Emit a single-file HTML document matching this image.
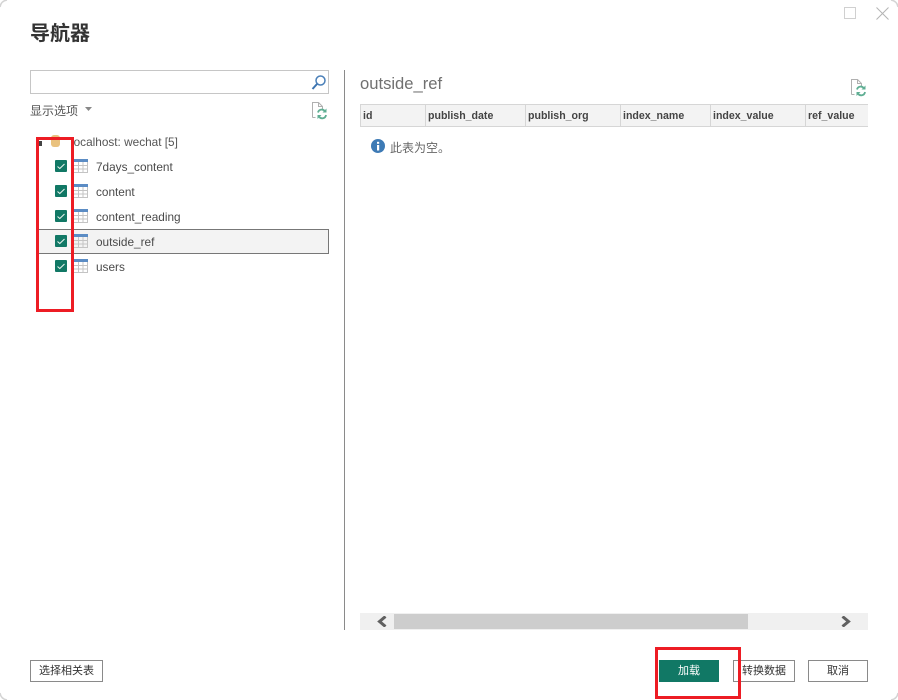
<!DOCTYPE html>
<html lang="zh">
<head>
<meta charset="utf-8">
<title>导航器</title>
<style>
html,body{margin:0;padding:0;background:#fff}
body{position:relative;width:898px;height:700px;overflow:hidden;font-family:"Liberation Sans","Noto Sans CJK SC",sans-serif;color:#4a4a4a;font-size:11.8px}
.a{position:absolute;box-sizing:border-box;white-space:nowrap}
.t{line-height:16px}
.cb{left:55px;width:12px;height:12px;background:#117865;border-radius:1px}
.cb svg,.ti svg{display:block}
.ti{left:73px;width:15px;height:14px}
.th{top:104px;height:23px;background:#f3f3f3;border:1px solid #d6d6d6;border-left:0;font-weight:bold;font-size:10.6px;line-height:22px;padding-left:2px;color:#444}
.btn{top:660px;height:22px;border:1px solid #8a8a8a;background:#fff;text-align:center;font-size:11px;line-height:20px;color:#333}
.red{border:3px solid #ed1c24}
</style>
</head>
<body>
<!-- window corners -->
<svg class="a" style="left:0;top:0" width="898" height="700"><path d="M0 7Q1 1 7 0M891 0Q897 1 898 7M0 693Q1 699 7 700M898 693Q897 699 891 700" fill="none" stroke="#d4d4d4" stroke-width="1.500"/></svg>

<!-- window controls -->
<div class="a" style="left:844px;top:7px;width:12px;height:12px;border:1px solid #d0d0d0"></div>
<svg class="a" style="left:876px;top:7px" width="13" height="13"><path d="M.5.5l12 12M12.500.5l-12 12" stroke="#b4b4b4" fill="none"/></svg>

<div class="a" style="left:30px;top:21px;font-size:20px;font-weight:bold;line-height:27px;color:#333">导航器</div>

<!-- search -->
<div class="a" style="left:30px;top:70px;width:299px;height:24px;border:1px solid #c6c6c6"></div>
<svg class="a" style="left:311px;top:74px" width="16" height="17"><circle cx="9.500" cy="6.500" r="4.500" fill="none" stroke="#4a7fb8" stroke-width="1.500"/><path d="M6 10l-4.500 5" stroke="#3c74b0" stroke-width="2" fill="none"/></svg>

<div class="a t" style="left:30px;top:103px;font-size:12px;color:#555">显示选项</div>
<svg class="a" style="left:85px;top:107px" width="8" height="5"><path d="M0 0h7L3.500 4z" fill="#888"/></svg>

<!-- refresh icon left -->
<svg class="a" style="left:312px;top:102px" width="16" height="18"><path d="M.5 15.500V.5h6l4 4v3M6.500.5v4h4M.5 15.500h3" fill="none" stroke="#b0b0b0"/><path d="M6 10.500a3.800 3.800 0 0 1 7-1M14 13a3.800 3.800 0 0 1-7 1.500" fill="none" stroke="#5fae93" stroke-width="1.800"/><path d="M14.500 6.500v4h-4zM5.500 17v-4h4z" fill="#5fae93"/></svg>

<!-- tree -->
<div class="a" style="left:38px;top:141px;width:4px;height:5px;background:#444"></div>
<div class="a" style="left:51px;top:135px;width:9px;height:12px;background:#e9c27f;border-radius:3px"></div>
<div class="a t" style="left:71px;top:134px;color:#555">localhost: wechat [5]</div>

<div class="a" style="left:38px;top:229px;width:291px;height:25px;background:#f3f3f3;border:1px solid #777;border-left:0"></div>

<div class="a cb" style="top:160px"><svg width="12" height="12"><path d="M2.500 6.500l2.300 2 4.700-4.500" fill="none" stroke="#e4f0ec" stroke-width="1.100"/></svg></div>
<div class="a cb" style="top:185px"><svg width="12" height="12"><path d="M2.500 6.500l2.300 2 4.700-4.500" fill="none" stroke="#e4f0ec" stroke-width="1.100"/></svg></div>
<div class="a cb" style="top:210px"><svg width="12" height="12"><path d="M2.500 6.500l2.300 2 4.700-4.500" fill="none" stroke="#e4f0ec" stroke-width="1.100"/></svg></div>
<div class="a cb" style="top:235px"><svg width="12" height="12"><path d="M2.500 6.500l2.300 2 4.700-4.500" fill="none" stroke="#e4f0ec" stroke-width="1.100"/></svg></div>
<div class="a cb" style="top:260px"><svg width="12" height="12"><path d="M2.500 6.500l2.300 2 4.700-4.500" fill="none" stroke="#e4f0ec" stroke-width="1.100"/></svg></div>

<div class="a ti" style="top:159px"><svg width="15" height="14"><rect width="15" height="3" fill="#5b8cc4"/><path d="M.5 3v10.500h14V3M.5 6.500h14M.5 10h14M5.500 3v10.500M10 3v10.500" fill="none" stroke="#c4c4c4"/></svg></div>
<div class="a ti" style="top:184px"><svg width="15" height="14"><rect width="15" height="3" fill="#5b8cc4"/><path d="M.5 3v10.500h14V3M.5 6.500h14M.5 10h14M5.500 3v10.500M10 3v10.500" fill="none" stroke="#c4c4c4"/></svg></div>
<div class="a ti" style="top:209px"><svg width="15" height="14"><rect width="15" height="3" fill="#5b8cc4"/><path d="M.5 3v10.500h14V3M.5 6.500h14M.5 10h14M5.500 3v10.500M10 3v10.500" fill="none" stroke="#c4c4c4"/></svg></div>
<div class="a ti" style="top:234px"><svg width="15" height="14"><rect width="15" height="3" fill="#5b8cc4"/><path d="M.5 3v10.500h14V3M.5 6.500h14M.5 10h14M5.500 3v10.500M10 3v10.500" fill="none" stroke="#c4c4c4"/></svg></div>
<div class="a ti" style="top:259px"><svg width="15" height="14"><rect width="15" height="3" fill="#5b8cc4"/><path d="M.5 3v10.500h14V3M.5 6.500h14M.5 10h14M5.500 3v10.500M10 3v10.500" fill="none" stroke="#c4c4c4"/></svg></div>

<div class="a t" style="left:96px;top:159px">7days_content</div>
<div class="a t" style="left:96px;top:184px">content</div>
<div class="a t" style="left:96px;top:209px">content_reading</div>
<div class="a t" style="left:96px;top:234px">outside_ref</div>
<div class="a t" style="left:96px;top:259px">users</div>

<!-- divider -->
<div class="a" style="left:344px;top:70px;width:1px;height:560px;background:#8a8a8a"></div>

<!-- right pane -->
<div class="a" style="left:360px;top:73px;font-size:16.6px;line-height:22px;color:#707070">outside_ref</div>
<svg class="a" style="left:851px;top:79px" width="16" height="18"><path d="M.5 15.500V.5h6l4 4v3M6.500.5v4h4M.5 15.500h3" fill="none" stroke="#b0b0b0"/><path d="M6 10.500a3.800 3.800 0 0 1 7-1M14 13a3.800 3.800 0 0 1-7 1.500" fill="none" stroke="#5fae93" stroke-width="1.800"/><path d="M14.500 6.500v4h-4zM5.500 17v-4h4z" fill="#5fae93"/></svg>

<div class="a th" style="left:360px;width:66px;border-left:1px solid #d6d6d6;padding-left:2px">id</div>
<div class="a th" style="left:426px;width:100px">publish_date</div>
<div class="a th" style="left:526px;width:95px">publish_org</div>
<div class="a th" style="left:621px;width:90px">index_name</div>
<div class="a th" style="left:711px;width:95px">index_value</div>
<div class="a th" style="left:806px;width:62px;border-right:0">ref_value</div>

<svg class="a" style="left:371px;top:139px" width="14" height="14"><circle cx="7" cy="7" r="7" fill="#3d7ab5"/><rect x="6" y="6" width="2.200" height="5.500" fill="#fff"/><rect x="6" y="2.800" width="2.200" height="2" fill="#fff"/></svg>
<div class="a t" style="left:390px;top:140px;font-size:12px;color:#666">此表为空。</div>

<!-- scrollbar -->
<div class="a" style="left:360px;top:613px;width:508px;height:17px;background:#f0f0f0"></div>
<div class="a" style="left:394px;top:614px;width:354px;height:15px;background:#cdcdcd"></div>
<svg class="a" style="left:376px;top:616px" width="11" height="11"><path d="M9.500 .5L3.500 5.500 9.500 10.500" fill="none" stroke="#606060" stroke-width="3"/></svg>
<svg class="a" style="left:841px;top:616px" width="11" height="11"><path d="M1.500 .5L7.500 5.500 1.500 10.500" fill="none" stroke="#606060" stroke-width="3"/></svg>

<!-- buttons -->
<div class="a btn" style="left:30px;width:73px">选择相关表</div>
<div class="a btn" style="left:659px;width:60px;background:#117865;border-color:#117865;color:#fff">加载</div>
<div class="a btn" style="left:733px;width:62px">转换数据</div>
<div class="a btn" style="left:808px;width:60px">取消</div>

<!-- annotations -->
<div class="a red" style="left:36px;top:137px;width:38px;height:175px"></div>
<div class="a red" style="left:655px;top:647px;width:86px;height:52px"></div>
</body>
</html>
